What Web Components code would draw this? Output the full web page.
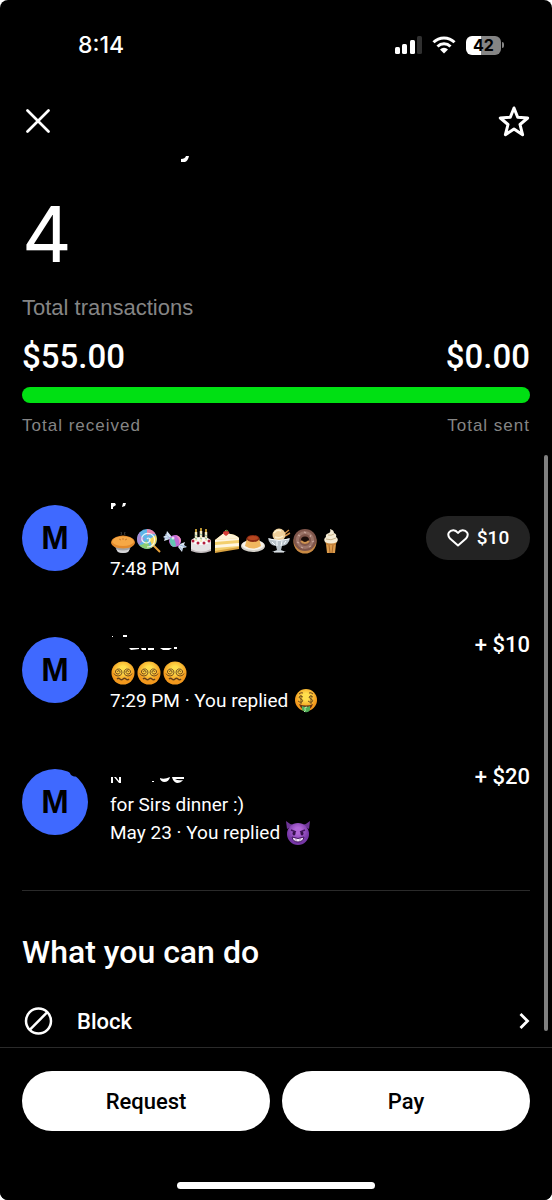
<!DOCTYPE html>
<html lang="en">
<head>
<meta charset="utf-8">
<meta name="viewport" content="width=device-width, initial-scale=1">
<title>Activity</title>
<style>
  html { background: #fff; }
  body {
    --body: Roboto, "Liberation Sans", sans-serif;
    margin: 0;
    color: #fff;
    font-family: "Liberation Sans", Arial, sans-serif;
    font-size: 19px;
    line-height: 28px;
  }
</style>
</head>
<body>
<activity-screen></activity-screen>

<script>
// small pictures used in the notes, all on a 26x26 grid
const EMOJI = {
  pie: ['🥧', `
    <path d="M4 17l4 7q5 2 10 0l4-7z" fill="#a3a3a5"/>
    <path d="M6 21l2 3q5 2 10 0l2-3q-7 3-14 0z" fill="#d6d6d8"/>
    <path d="M1 15q0-4 5-6q7-3 14 0q5 2 5 6q-1 5-12 5.500Q2 20 1 15z" fill="#e38a2c"/>
    <path d="M2 14q1-4 6-5q5-1 10 0q5 1 6 5q-3 4-11 4T2 14z" fill="#f6a846"/>
    <path d="M9 11l2 1M13 10v2M17 11l-2 1" stroke="#c87a2c"/>
    <path d="M11 7q1-2 0-3M15 7q-1-1 0-3" stroke="#444" fill="none"/>`],
  lollipop: ['🍭', `
    <path d="M16 16l8 8" stroke="#e7a13b" stroke-width="2"/>
    <circle cx="11" cy="11" r="10" fill="#5fb5e8"/>
    <path d="M11 1a10 10 0 0 1 9 6q-5-3-9 1z" fill="#ea86ad"/>
    <path d="M20 7a10 10 0 0 1-5 13q2-6-3-8z" fill="#f3d65b"/>
    <path d="M15 20a10 10 0 0 1-12-3q6 0 7-5z" fill="#8ccd72"/>
    <path d="M3 17a10 10 0 0 1 1-13q0 6 5 6z" fill="#a58bd4"/>
    <path d="M11 11q1-2 3 0q0 4-4 4q-5-1-4-6q3-5 9-3q5 3 3 9q-2 4-7 4" fill="none" stroke="#fff" stroke-width="1.200" opacity=".85"/>`],
  candy: ['🍬', `
    <path d="M8 11L2 13l1-3-2-1 3-2 1-4 5 6zM18 16l5-2-1 3 3 2-4 1-1 4-4-5z" fill="#d9e6f4"/>
    <path d="M3 6l5 4M2 10h5M18 17l6 2M18 19l2 3" stroke="#91a8cf" stroke-width=".8"/>
    <circle cx="13" cy="13" r="6" fill="#be6bd6"/>
    <path d="M8 10q5-2 6 8l-3 1q-4-3-3-9z" fill="#63c6b3"/>
    <path d="M13 7q5 3 4 9l2-3q0-5-6-6z" fill="#f28dc4"/>
    <circle cx="11" cy="10" r="1.500" fill="#fff" opacity=".7"/>`],
  cake: ['🎂', `
    <path d="M3 13v9q10 5 20 0v-9z" fill="#e5e2e3"/>
    <ellipse cx="13" cy="13" rx="10" ry="4" fill="#fafafa"/>
    <path d="M3 21q10 5 20 0v2q-10 4-20 0z" fill="#bfb8bb"/>
    <path d="M8 4v9M13 3v11M18 4v9" stroke="#f6e9c1" stroke-width="2.500"/>
    <path d="M7 7l2 1M12 6l2 1M17 7l2 1M7 10l2 1M12 10l2 1M17 10l2 1" stroke="#82b6a0"/>
    <path d="M8 1v3M13 0v3M18 1v3" stroke="#f8c544" stroke-width="1.500"/>
    <g fill="#b51f3d"><circle cx="5" cy="13" r="1.500"/><circle cx="10" cy="15" r="1.500"/><circle cx="16" cy="15" r="1.500"/><circle cx="21" cy="13" r="1.500"/></g>`],
  slice: ['🍰', `
    <path d="M1 12l9-7q12 1 15 5v10L1 24z" fill="#f3cf6d"/>
    <path d="M1 12l9-7q12 1 15 5z" fill="#fff4d6"/>
    <path d="M1 12l24-2v2L1 14zM1 17l24-2v3L1 20z" fill="#fff5df"/>
    <path d="M1 23l24-4v2L1 25z" fill="#d9a341"/>
    <path d="M9 5q0-2 3-2q4 0 3 2q-1 2-3 3q-2-1-3-3z" fill="#d73e35"/>
    <path d="M11 3l1-1 2 1" fill="none" stroke="#69a140"/>`],
  custard: ['🍮', `
    <ellipse cx="13" cy="18" rx="12" ry="6" fill="#d4d0c9"/>
    <ellipse cx="13" cy="17" rx="11" ry="5" fill="#f7f3ea"/>
    <path d="M7 10l-2 8q8 5 16 0l-2-8z" fill="#f1b760"/>
    <ellipse cx="13" cy="10.500" rx="6.500" ry="3.500" fill="#8c2b13"/>
    <ellipse cx="13" cy="10" rx="5" ry="2" fill="#b5461f"/>`],
  sundae: ['🍨', `
    <path d="M18 6l5-4M19 8l5-3" stroke="#d48f45" stroke-width="1.500"/>
    <circle cx="13" cy="7" r="6.500" fill="#f0d09b"/>
    <path d="M8 5q3-4 7-2M9 9q4 2 8-1" stroke="#fff1cf" stroke-width="1.500" fill="none"/>
    <path d="M2 10q11 4 22 0q-1 7-8 8l-1 4 5 2H6l5-2-1-4q-7-1-8-8z" fill="#b9c3ca"/>
    <path d="M3 11q10 3 20 0M6 14l3 3M11 13v5M16 13l-1 5M20 13l-2 3M8 24h10" fill="none" stroke="#f8fcff"/>`],
  donut: ['🍩', `
    <circle cx="13" cy="14" r="11.500" fill="#c98a44"/>
    <ellipse cx="13" cy="12" rx="11.500" ry="11" fill="#80564b"/>
    <circle cx="13" cy="12" r="7.500" fill="none" stroke="#9c7468" stroke-width="3"/>
    <ellipse cx="13" cy="12" rx="4" ry="3.500" fill="#1b0d09"/>
    <path d="M9 13q4 4 8 0" stroke="#cf9250" stroke-width="2" fill="none"/>
    <path d="M6 7l2 1M12 4l2 1M19 7l-1 2M5 14l2 1M20 14l2-1M9 19l2 1M17 19l2-1" stroke="#c9a59b" stroke-width="1.200"/>`],
  cone: ['🍦', `
    <path d="M7 13h12l-1 3-1 9h-8l-1-9z" fill="#dc9b4b"/>
    <path d="M8 16h10M11 17l1 8M15 17l-1 8" stroke="#a96829"/>
    <path d="M12 1q4 1 4 4q3 1 2 4q3 2 1 5q-6 3-12 0q-2-3 1-5q-1-3 3-4q2-1 1-4z" fill="#f4ead3"/>
    <path d="M10 7q3 1 6-1M8 11q5 2 10-1" stroke="#c7b18a" fill="none"/>`],
  dizzy: ['😵‍💫', `
    <circle cx="13" cy="13" r="11.500" fill="url(#face)"/>
    <g fill="none" stroke="#65401a" stroke-width=".9">
      <path d="M8 12q-1-1 .5-1.500q2 0 1.500 2q-1 2-3 1.500q-2-1-1.500-3q1-2.500 4-2q3 1 2.500 4q-1 3-4 3q-3 0-4-2.500"/>
      <path d="M18 12q1-1-.5-1.500q-2 0-1.500 2q1 2 3 1.500q2-1 1.500-3q-1-2.500-4-2q-3 1-2.500 4q1 3 4 3q3 0 4-2.500"/>
      <path d="M7 19q1.500-1.500 3 0t3 0t3 0t3 0" stroke-width="1.400"/>
    </g>`],
  money: ['🤑', `
    <circle cx="13" cy="12" r="11" fill="url(#face)"/>
    <path d="M6 6q2-2 4-1M16 5q2-1 4 1" fill="none" stroke="#70451c"/>
    <path d="M10 9q-3-2-4 0q0 1 2 2q3 1 1 3q-2 1-4-1M8 7v9M20 9q-3-2-4 0q0 1 2 2q3 1 1 3q-2 1-4-1M18 7v9" fill="none" stroke="#73501d"/>
    <path d="M6 16q7 3 14 0q-2 6-7 6t-7-6z" fill="#653314"/>
    <path d="M9 18q4 2 8 0v4q-2 3-5 2l-3-2z" fill="#4fae59"/>
    <path d="M14 19q-3 0-2 2t-1 3" fill="none" stroke="#bce7ae"/>`],
  devil: ['😈', `
    <path d="M2 9L1 1q3 3 8 4zM24 9l1-8q-3 3-8 4z" fill="#6e3597"/>
    <circle cx="13" cy="14" r="11" fill="url(#imp)"/>
    <path d="M6 10l5 2M20 10l-5 2" stroke="#43175f" stroke-width="1.500"/>
    <ellipse cx="9" cy="13.500" rx="1.500" ry="2" fill="#34104b"/><ellipse cx="17" cy="13.500" rx="1.500" ry="2" fill="#34104b"/>
    <path d="M7 17q6 3 12 0q-1 5-6 5t-6-5z" fill="#f4e8fa" stroke="#43175f"/>
    <path d="M11 18v3M15 18v3" stroke="#8f62a5" stroke-width=".7"/>`],
};

// pieces of the hidden names that still show
const NAMES = {
  first: '<path d="M1 4h4l1 2-3 2v2H1zM13 4h3l-1 3-3 1z"/>',
  second: '<path d="M13 4h4v2h-4zM2 5h1v1H2zM19 17h10v1l-8 1zM31 17h5v2h-4zM38 17h6v2h-6zM50 17h12l-3 2h-6zM64 16h3v2h-3z"/>',
  third: '<path d="M1 14h2v6H1zM4 14h2l3 4v-4h2v6H9zM42 18h2v1h-2zM50 15q4 2 10-1q-1 5-6 5q-4-1-4-4zM62 14h12v2h-9q3 2 8 1q-2 3-6 3-4-1-5-6z"/>',
};

function define(name, html) {
  const template = document.createElement('template');
  template.innerHTML = html;
  const Base = class extends HTMLElement {
    constructor() {
      super();
      this.attachShadow({ mode: 'open' });
      this.shadowRoot.appendChild(template.content.cloneNode(true));
    }
  };
  customElements.define(name, Base);
}

class EmojiIcon extends HTMLElement {
  constructor() {
    super();
    this.attachShadow({ mode: 'open' });
  }
  connectedCallback() {
    const [label, art] = EMOJI[this.getAttribute('name')];
    this.shadowRoot.innerHTML = `
      <style>
        :host { display: flex; width: 26px; height: 26px; white-space: normal; }
        svg { display: block; }
      </style>
      <svg width="26" height="26" viewBox="0 0 26 26" role="img" aria-label="${label}">
        <defs>
          <radialGradient id="face" cy=".35"><stop offset=".3" stop-color="#ffdf4d"/><stop offset="1" stop-color="#f2981d"/></radialGradient>
          <radialGradient id="imp" cy=".35"><stop offset=".3" stop-color="#b168d8"/><stop offset="1" stop-color="#7536a5"/></radialGradient>
        </defs>
        ${art}
      </svg>`;
  }
}
customElements.define('emoji-icon', EmojiIcon);

class HiddenName extends HTMLElement {
  constructor() {
    super();
    this.attachShadow({ mode: 'open' });
  }
  connectedCallback() {
    this.shadowRoot.innerHTML = `
      <style>:host { display: block; height: 28px; } svg { display: block; }</style>
      <svg width="80" height="28" fill="#fff" aria-hidden="true">${NAMES[this.getAttribute('name')]}</svg>`;
  }
}
customElements.define('hidden-name', HiddenName);

define('status-bar', `
  <style>
    :host { display: flex; align-items: center; justify-content: space-between; height: 90px; padding: 0 48px 0 78px; box-sizing: border-box; font-family: Inter, sans-serif; }
    time { font-size: 23px; font-weight: 500; }
    .icons { display: flex; align-items: center; gap: 10px; }
    .battery { display: flex; align-items: center; gap: 1px; }
    .level { width: 35px; height: 19px; border-radius: 6px; background: linear-gradient(90deg, #fff 44%, #858585 44%); color: #000; font-size: 16px; font-weight: 700; line-height: 19px; text-align: center; }
    .nub { width: 2px; height: 6px; border-radius: 0 2px 2px 0; background: #858585; }
  </style>
  <time>8:14</time>
  <div class="icons">
    <svg width="27" height="18" viewBox="0 0 27 18" fill="#fff" aria-hidden="true">
      <rect y="11" width="5" height="7" rx="1.500"/><rect x="7" y="8" width="5" height="10" rx="1.500"/>
      <rect x="15" y="4" width="5" height="14" rx="1.500"/><rect x="22" width="5" height="18" rx="1.500" fill="#303030"/>
    </svg>
    <svg width="24" height="18" viewBox="0 0 24 18" aria-hidden="true">
      <g fill="none" stroke="#fff" stroke-width="3"><path d="M1.500 6.200a15 15 0 0 1 21 0"/><path d="M5.500 10.500a9.300 9.300 0 0 1 13 0"/></g>
      <path d="M12 17.500l-4-4a5.500 5.500 0 0 1 8 0z" fill="#fff"/>
    </svg>
    <div class="battery"><div class="level">42</div><div class="nub"></div></div>
  </div>`);

define('top-nav', `
  <style>
    :host { display: flex; justify-content: space-between; padding: 9px 22px 0; }
    button { display: grid; place-items: center; width: 32px; height: 44px; padding: 0; border: 0; background: none; color: #fff; }
    svg { fill: none; stroke: currentColor; }
  </style>
  <button aria-label="Close"><svg width="24" height="24" viewBox="0 0 24 24" stroke-width="2.700" stroke-linecap="round"><path d="M1.500 1.500l21 21M22.500 1.500l-21 21"/></svg></button>
  <button aria-label="Favorite"><svg width="32" height="32" viewBox="0 0 32 32" stroke-width="3" stroke-linejoin="round"><path d="M16 3l3.700 9.300 10 .7-7.700 6.500 2.600 10.200L16 24l-8.600 5.700L10 19.500 2.300 13l10-.7z"/></svg></button>`);

define('account-stats', `
  <style>
    :host { display: block; padding: 0 22px; }
    .mark { display: block; margin: 12px 0 0 158px; }
    .count { margin-top: 23px; font-family: Inter, sans-serif; font-size: 77px; line-height: 96px; }
    .label { margin-top: 12px; color: #858585; font-size: 22px; }
    .row { display: flex; justify-content: space-between; }
    .sums { margin-top: 15px; font: 500 33px/40px var(--body); }
    .bar { height: 16px; margin-top: 10px; border-radius: 8px; background: #00e013; }
    .captions { margin-top: 9px; color: #858585; font-size: 17px; letter-spacing: 1px; }
  </style>
  <svg class="mark" width="10" height="8" fill="#fff" aria-hidden="true"><path d="M1 4q4 0 5-3h3q-1 5-4 6H1z"/></svg>
  <div class="count">4</div>
  <div class="label">Total transactions</div>
  <div class="row sums"><span>$55.00</span><span>$0.00</span></div>
  <div class="bar"></div>
  <div class="row captions"><span>Total received</span><span>Total sent</span></div>`);

define('activity-row', `
  <style>
    :host { display: flex; align-items: flex-start; padding: 24px 0; gap: 22px; }
    .avatar { flex: none; display: grid; place-items: center; width: 66px; height: 66px; margin-top: 6px; border-radius: 50%; background: radial-gradient(circle at var(--notch, -20px -20px), #000 5px, #3f69ff 6px); color: #000; font-size: 33px; font-weight: 700; }
    .text { flex: 1; min-width: 0; }
    .amount { font: 500 22px/28px var(--body); }
  </style>
  <div class="avatar">M</div>
  <div class="text"><slot></slot></div>
  <div class="amount"><slot name="amount"></slot></div>`);

// a line of text that may hold emoji
define('note-line', `
  <style>
    :host { display: flex; align-items: center; height: 28px; font-family: var(--body); white-space: pre; }
  </style>
  <slot></slot>`);

define('like-button', `
  <style>
    :host { display: block; padding-top: 17px; }
    button { display: flex; align-items: center; justify-content: center; gap: 8px; width: 104px; height: 44px; border: 0; border-radius: 22px; background: #232323; color: #fff; font: inherit; font-size: 19px; }
  </style>
  <button>
    <svg width="22" height="18" viewBox="0 0 22 18" fill="none" stroke="currentColor" stroke-width="2" stroke-linejoin="round" aria-hidden="true"><path d="M11 16.500L3 9.500C-1 5 3 1 6.500 1.200Q9 1.300 11 4q2-2.700 4.500-2.800C19 1 23 5 19 9.500z"/></svg>
    <span><slot></slot></span>
  </button>`);

define('action-list', `
  <style>
    :host { display: block; margin: 19px 22px 0; border-top: 1px solid #2a2a2a; font-family: var(--body); }
    h2 { margin: 41px 0 0; font-size: 32px; font-weight: 500; line-height: 40px; }
    button { display: flex; align-items: center; width: 100%; height: 48px; margin-top: 25px; padding: 0; border: 0; background: none; color: #fff; font: inherit; font-size: 22px; font-weight: 500; text-align: left; }
    span { flex: 1; padding: 2px 0 0 22px; }
    svg { fill: none; stroke: currentColor; }
  </style>
  <h2>What you can do</h2>
  <button>
    <svg width="33" height="28" viewBox="0 0 33 28" stroke-width="2.500" aria-hidden="true"><circle cx="16.500" cy="14" r="12.500"/><path d="M7.700 22.800L25.300 5.200"/></svg>
    <span>Block</span>
    <svg width="11" height="16" viewBox="0 0 11 16" stroke-width="2.800" aria-hidden="true"><path d="M1.500 1l7 7-7 7"/></svg>
  </button>`);

define('pay-footer', `
  <style>
    :host { display: block; padding: 23px 22px 11px; border-top: 1px solid #2a2a2a; background: #000; }
    .buttons { display: grid; grid-template-columns: 1fr 1fr; gap: 12px; }
    button { height: 60px; padding: 2px 0 0; border: 0; border-radius: 30px; background: #fff; color: #000; font: 500 22px/28px var(--body); }
    .home { width: 198px; height: 7px; margin: 51px auto 0; border-radius: 4px; background: #fff; }
  </style>
  <div class="buttons"><button>Request</button><button>Pay</button></div>
  <div class="home"></div>`);

define('activity-screen', `
  <style>
    :host { display: flex; flex-direction: column; min-height: 100vh; overflow: hidden; border-radius: 8px; background: #000; }
    main { position: relative; flex: 1; }
    .list { padding: 35px 22px 0; }
    /* scroll indicator floats over the content */
    .thumb { position: absolute; top: 312px; right: 4px; bottom: 16px; width: 4px; border-radius: 2px; background: #808080; }
  </style>
  <status-bar></status-bar>
  <top-nav></top-nav>
  <main>
    <account-stats></account-stats>
    <div class="list">
      <activity-row>
        <hidden-name name="first"></hidden-name>
        <note-line><emoji-icon name="pie"></emoji-icon><emoji-icon name="lollipop"></emoji-icon><emoji-icon name="candy"></emoji-icon><emoji-icon name="cake"></emoji-icon><emoji-icon name="slice"></emoji-icon><emoji-icon name="custard"></emoji-icon><emoji-icon name="sundae"></emoji-icon><emoji-icon name="donut"></emoji-icon><emoji-icon name="cone"></emoji-icon></note-line>
        <note-line>7:48 PM</note-line>
        <like-button slot="amount">$10</like-button>
      </activity-row>
      <activity-row style="--notch: 63px 10px">
        <hidden-name name="second"></hidden-name>
        <note-line><emoji-icon name="dizzy"></emoji-icon><emoji-icon name="dizzy"></emoji-icon><emoji-icon name="dizzy"></emoji-icon></note-line>
        <note-line>7:29 PM · You replied <emoji-icon name="money"></emoji-icon></note-line>
        <span slot="amount">+ $10</span>
      </activity-row>
      <activity-row style="--notch: 53px 2px">
        <hidden-name name="third"></hidden-name>
        <note-line>for Sirs dinner :)</note-line>
        <note-line>May 23 · You replied <emoji-icon name="devil"></emoji-icon></note-line>
        <span slot="amount">+ $20</span>
      </activity-row>
    </div>
    <action-list></action-list>
    <div class="thumb"></div>
  </main>
  <pay-footer></pay-footer>`);
</script>
</body>
</html>
